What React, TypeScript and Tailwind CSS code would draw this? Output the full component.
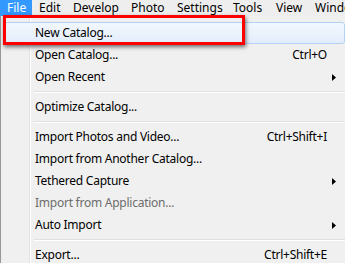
import { ReactNode } from "react";

const menuBar = [
  { label: "File", w: "w-[32px]", active: true },
  { label: "Edit", w: "w-[34px]" },
  { label: "Develop", w: "w-[58px]" },
  { label: "Photo", w: "w-[46px]" },
  { label: "Settings", w: "w-[56px]" },
  { label: "Tools", w: "w-[43px]" },
  { label: "View", w: "w-[39px]" },
  { label: "Window", w: "w-[60px]" },
];

type Item =
  | { sep: true }
  | {
      sep?: false;
      label: string;
      shortcut?: string;
      sub?: boolean;
      disabled?: boolean;
      hover?: boolean;
    };

const items: Item[] = [
  { label: "New Catalog...", hover: true },
  { label: "Open Catalog...", shortcut: "Ctrl+O" },
  { label: "Open Recent", sub: true },
  { sep: true },
  { label: "Optimize Catalog..." },
  { sep: true },
  { label: "Import Photos and Video...", shortcut: "Ctrl+Shift+I" },
  { label: "Import from Another Catalog..." },
  { label: "Tethered Capture", sub: true },
  { label: "Import from Application...", disabled: true },
  { label: "Auto Import", sub: true },
  { sep: true },
  { label: "Export...", shortcut: "Ctrl+Shift+E" },
];

function Arrow() {
  return (
    <svg width="4" height="7" viewBox="0 0 4 7" className="block">
      <path d="M0 0 L4 3.5 L0 7 Z" fill="#000" />
    </svg>
  );
}

function Row({ children, hover }: { children: ReactNode; hover?: boolean }) {
  return (
    <div
      className={
        hover
          ? "flex h-[22px] items-center rounded-[3px] border border-[#b3d1f5] bg-[linear-gradient(to_bottom,#f2f7fe,#e3edfb)] pl-[30px]"
          : "flex h-[22px] items-center border border-transparent pl-[30px]"
      }
    >
      {children}
    </div>
  );
}

export default function App() {
  return (
    <div
      className="relative h-[263px] w-[345px] overflow-hidden bg-[#f0f0f0] text-[12px] text-[#000]"
      style={{ fontFamily: '"Segoe UI", "Noto Sans", sans-serif' }}
    >
      {/* Menu bar */}
      <div className="flex h-[16px] items-center overflow-hidden bg-[#eeeeee]">
        {menuBar.map((m) => (
          <div
            key={m.label}
            className={`${m.w} flex h-full shrink-0 items-center whitespace-nowrap pl-[7px] leading-none ${
              m.active ? "bg-[#3399ff] text-white" : "text-[#000]"
            }`}
          >
            {m.label}
          </div>
        ))}
      </div>

      {/* Dropdown */}
      <div className="h-[247px] border-l border-[#979797] bg-[#f0f0f0] bg-[linear-gradient(to_right,transparent_28px,#e2e3e3_28px,#e2e3e3_29px,#ffffff_29px,#ffffff_30px,transparent_30px)] pl-[3px] pt-[6px] tracking-[-0.25px]">
        {items.map((it, i) =>
          it.sep ? (
            <div key={i} className="flex h-[8px] items-center pl-[30px]">
              <div className="h-[2px] w-full border-t border-b border-t-[#e0e0e0] border-b-white" />
            </div>
          ) : (
            <Row key={i} hover={it.hover}>
              <span
                className={`flex-1 whitespace-nowrap ${it.disabled ? "text-[#6d6d6d]" : "text-[#000]"}`}
              >
                {it.label}
              </span>
              {it.shortcut && (
                <span className="whitespace-nowrap">{it.shortcut}</span>
              )}
              <span className="flex w-[17px] shrink-0 items-center pl-[5px]">
                {it.sub && <Arrow />}
              </span>
            </Row>
          )
        )}
      </div>

      {/* Red highlight annotation */}
      <div className="absolute left-[3px] top-[15px] h-[30px] w-[242px] border-[3px] border-[#ff0000] shadow-[1px_2px_4px_rgba(0,0,0,0.55)]" />
    </div>
  );
}
